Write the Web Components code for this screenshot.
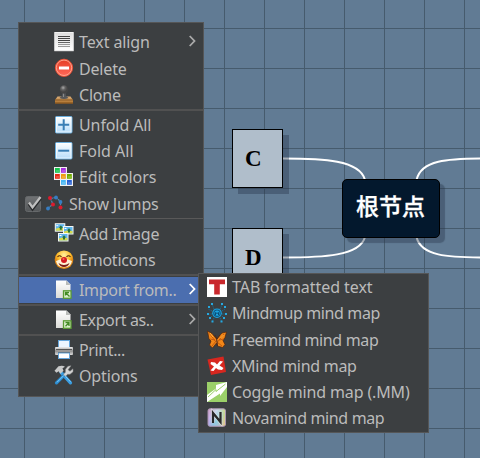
<!DOCTYPE html>
<html lang="en">
<head>
<meta charset="utf-8">
<title>Mind map</title>
<style>
html,body{margin:0;width:480px;height:458px;overflow:hidden}
</style>
</head>
<body>
<mind-canvas>
  <map-node style="left:232px;top:129px;width:51px">C</map-node>
  <map-node style="left:232px;top:228px;width:51px">D</map-node>
  <map-node root style="left:342px;top:179px;width:98px">根节点</map-node>
  <context-menu slot="menu" style="left:18px;top:22px;width:186px;height:375px;--top:6px">
    <menu-item icon="align" w="71" arrow style="--h:27px">Text align</menu-item>
    <menu-item icon="delete" w="48">Delete</menu-item>
    <menu-item icon="clone" w="42">Clone</menu-item>
    <menu-separator></menu-separator>
    <menu-item icon="plus" w="72">Unfold All</menu-item>
    <menu-item icon="minus" w="55">Fold All</menu-item>
    <menu-item icon="colors" w="77" style="--h:27px">Edit colors</menu-item>
    <menu-item icon="jumps" w="90" checked>Show Jumps</menu-item>
    <menu-separator thin></menu-separator>
    <menu-item icon="image" w="80">Add Image</menu-item>
    <menu-item icon="clown" w="76">Emoticons</menu-item>
    <menu-separator></menu-separator>
    <menu-item icon="import" w="97" arrow active>Import from..</menu-item>
    <menu-separator></menu-separator>
    <menu-item icon="export" w="75" arrow>Export as..</menu-item>
    <menu-separator></menu-separator>
    <menu-item icon="print" w="46">Print...</menu-item>
    <menu-item icon="tools" w="58">Options</menu-item>
  </context-menu>
  <context-menu slot="menu" style="left:198px;top:273px;width:231px;height:160px;--top:0px;--inset:8px">
    <menu-item icon="tab" w="141">TAB formatted text</menu-item>
    <menu-item icon="mindmup" w="148" style="--h:27px">Mindmup mind map</menu-item>
    <menu-item icon="butterfly" w="146">Freemind mind map</menu-item>
    <menu-item icon="xmind" w="125">XMind mind map</menu-item>
    <menu-item icon="coggle" w="178">Coggle mind map (.MM)</menu-item>
    <menu-item icon="nova" w="152">Novamind mind map</menu-item>
  </context-menu>
</mind-canvas>
<script>
const page = `<defs><linearGradient id="pg" x2="0" y2="1"><stop stop-color="#fff"/><stop offset="1" stop-color="#dcdcd8"/></linearGradient></defs>
<path d="M2 .5h10.5l4 4v13.500H2z" fill="url(#pg)"/><path d="M12 .5V5h4.500z" fill="#b9bbb8"/><rect x="9.500" y="10.800" width="7.500" height="7.500" fill="#dcf0cd" stroke="#5b9b34" stroke-width="1.300"/>`;
const photo = (x, y) => `<g transform="translate(${x} ${y})"><rect width="10.5" height="8.5" fill="#f4f7f5"/><rect x="1" y="1" width="8.5" height="6.5" fill="#5fb5ed"/><path d="M1 5.5l3-1 5.5 .5v2.500H1z" fill="#d6d94e"/><path d="M6 2.200l2.200 2.300H7v2H5v-2H4z" fill="#28733b"/><path d="M1.500 2.500h2" stroke="#fff"/></g>`;
const tile = (x, y, c) => `<rect x="${x}" y="${y}" width="6.500" height="6.500" fill="#f2f2f2"/><rect x="${x + 1}" y="${y + 1}" width="4.800" height="4.800" fill="${c}"/><path d="M${x + 2} ${y + 4}h3" stroke="#fff" stroke-opacity=".35"/>`;
const button = `<defs><linearGradient id="bt" x2="0" y2="1"><stop stop-color="#fff"/><stop offset="1" stop-color="#b5dcfa"/></linearGradient></defs><rect x="1.500" y="1.500" width="16.500" height="16.500" rx="1" fill="url(#bt)" stroke="#6aaede"/><rect x="2.500" y="2.500" width="14.500" height="14.500" fill="none" stroke="#fff" stroke-opacity=".7"/>`;
const ICONS = {
  align: `<defs><linearGradient id="al" x2="0" y2="1"><stop stop-color="#dedede"/><stop offset="1" stop-color="#fff"/></linearGradient></defs><rect x=".8" y=".5" width="18.400" height="18.200" fill="url(#al)" stroke="#f2f2f2"/><path d="M4 4.500h12M4 6.500h12M4 8.500h12" stroke="#444"/><path d="M4 10.500h12" stroke="#666"/><path d="M4 12.500h12M4 14.500h12" stroke="#999"/>`,
  delete: `<defs><linearGradient id="dl" x2="0" y2="1"><stop stop-color="#e53c22"/><stop offset="1" stop-color="#ff6a5c"/></linearGradient></defs><circle cx="10" cy="8.800" r="8.600" fill="url(#dl)" stroke="#e64d35"/><circle cx="10" cy="8.800" r="7.700" fill="none" stroke="#ffad94" stroke-width=".9"/><path d="M5 7.500h10v3H5z" fill="#fff"/>`,
  clone: `<defs><linearGradient id="st" x2="0" y2="1"><stop stop-color="#deb07a"/><stop offset="1" stop-color="#a76b25"/></linearGradient><radialGradient id="kn" cx=".4" cy=".3"><stop stop-color="#aaa"/><stop offset=".5" stop-color="#626262"/><stop offset="1" stop-color="#444"/></radialGradient></defs><path d="M1 18.500V15l2.500-3.500h13L19 15v3.500z" fill="url(#st)"/><path d="M1 15h18M1 18h18" stroke="#85551e"/><path d="M8.200 6h3.600v4.500l2.700 2.500q-4.500 2-9 0l2.700-2.500z" fill="#55575a"/><path d="M9.500 7v5" stroke="#8a8a8a"/><circle cx="10" cy="4.500" r="4.200" fill="url(#kn)"/>`,
  plus: button + `<path d="M4.200 9.700h11M9.700 4.200v11" stroke="#397eb5" stroke-width="2"/>`,
  minus: button + `<path d="M4.200 9.700h11" stroke="#397eb5" stroke-width="2"/>`,
  colors: `<rect width="13" height="13" fill="#eee"/><rect x="6" y="6" width="13" height="13" fill="#eee"/>` + tile(0, 0, '#16c44b') + tile(6, 0, '#a82ede') + tile(0, 6, '#e62a16') + tile(6, 6, '#f19c12') + tile(12, 6, '#71ad00') + tile(6, 12, '#48b7f3') + tile(12, 12, '#2761d4'),
  jumps: `<path d="M2 13L7 9.500 4.500 3.500 10 2.500 14.500 6.500V13" fill="none" stroke="#4e89b8" stroke-width="1.200" stroke-dasharray="2 .6"/><g fill="#dc1b2c"><circle cx="4" cy="3" r="2"/><circle cx="7" cy="9.500" r="2"/><circle cx="14.500" cy="12.500" r="2"/></g><g fill="#367dc2"><circle cx="10" cy="2.500" r="1.900"/><circle cx="14.500" cy="7" r="1.900"/><circle cx="2" cy="13.500" r="1.900"/></g>`,
  image: `<g transform="translate(0 -1)">${photo(.8, .2)}${photo(9, 3)}${photo(4, 10)}</g>`,
  clown: `<defs><radialGradient id="cl" cy=".25"><stop stop-color="#fff0a0"/><stop offset=".7" stop-color="#fdbd2c"/><stop offset="1" stop-color="#e08815"/></radialGradient></defs><circle cx="10" cy="9.700" r="9.300" fill="url(#cl)"/><path d="M2 11q8-4 16 0-1 6-8 6.500Q3 17 2 11z" fill="#fff1d3"/><path d="M4.500 13q5.500 4 11 0-1.500 4-5.500 4t-5.500-4z" fill="#7b1b14"/><path d="M3.500 7Q5.500 4.500 7.500 7M12.500 7q2-2.500 4 0" stroke="#57290e" stroke-width="1.200" fill="none"/><circle cx="10" cy="10" r="3" fill="#d51a21"/><circle cx="9.500" cy="9" r="1" fill="#f46a5d"/>`,
  import: page + `<path d="M11.500 15.500v-3H15M12 13l3.500 3.500" fill="none" stroke="#438a24" stroke-width="1.300"/>`,
  export: page + `<path d="M11.500 12.500h3.500V16M15 12.800l-3.500 3.500" fill="none" stroke="#438a24" stroke-width="1.300"/>`,
  print: `<defs><linearGradient id="pr" x2="0" y2="1"><stop stop-color="#eee"/><stop offset=".5" stop-color="#8d8d8d"/><stop offset="1" stop-color="#ddd"/></linearGradient></defs><rect x="4.500" y=".5" width="11" height="8" fill="#edf6ff" stroke="#67a7dc"/><rect x="1" y="7" width="18" height="8" rx="1" fill="url(#pr)"/><path d="M2 9.500h16" stroke="#555"/><path d="M4 12.500h12" stroke="#555"/><rect x="4.500" y="13" width="11" height="5.500" fill="#fff" stroke="#67a7dc"/>`,
  tools: `<g transform="translate(0 -.7)"><path d="M7 7l9.500 10.500" stroke="#3a9de0" stroke-width="3.300" stroke-linecap="round"/><path d="M11 9l-8.500 8.500" stroke="#2b8cd0" stroke-width="3.300" stroke-linecap="round"/><path d="M10 10l-7 7M10 9.500l6.500 7" stroke="#82cdfb"/><path d="M.5 5.500l4-4.500q4-1.500 6.500 .5L8.500 3l1 2.500-3 3L4.500 6 2.500 7.500z" fill="#c8c9c9"/><path d="M17 .5l-3 .5-2.500 3v3L9.500 9l2 2 2-2h2.500l3-2.500v-3L16 6l-2-1.500z" fill="#d5d5d5" stroke="#888" stroke-width=".5"/></g>`,
  tab: `<rect width="20" height="20" fill="#fff"/><path d="M2 2.500h16v4.800h-5.200V17.500H7.200V7.300H2z" fill="#c9282d"/>`,
  mindmup: `<g fill="none" stroke="#176b91" stroke-width="1"><path d="M7 6L5 1M13 6l2.500-5M5 8L1 6M15 8l3-2M5 11H1M15 11h4M5 13l-3 3M15 13l3 3M7 15l-2 4M13 15l2 4" stroke-dasharray="1.500 1"/></g><circle cx="10" cy="10.200" r="4.800" fill="#1ca4df"/><circle cx="10" cy="10.200" r="3.200" fill="none" stroke="#0f5a86" stroke-width="1.200"/><path d="M8.500 12V9.500l1.500 1 1.500-1V12" fill="none" stroke="#0b4e78"/><path d="M4 0h2v2H4zM14 0h2v2h-2zM1 3h2v2H1zM17 3h2v2h-2zM0 10h2v2H0zM18 10h2v2h-2zM2 14h2v2H2zM16 14h2v2h-2zM4.500 17.500h2v2h-2zM13.500 17.500h2v2h-2z" fill="#27a8df"/>`,
  butterfly: `<path d="M9.500 9L5 3.500.5 1 2 9l2 2-1.500 4 3 3 4-5 1 3 5 1.500 2.500-3-2-4 2-3L19.500 2 15 3z" fill="#f38718" stroke="#53240b" stroke-width=".7"/><path d="M2.500 3.500l6 8M17 4l-6.500 8M5 16l4-5M15 16l-5-4M3 9l5 1M17 9l-5 1" stroke="#b9500b" stroke-width=".8"/><path d="M9.500 8l1 8M10 9L8 5M10 9l3-4" stroke="#4d2a1b" stroke-width="1"/><path d="M3 3l3 4M16.500 5l-3 3" stroke="#ffb140"/>`,
  xmind: `<path d="M.5 3.500L16.500.5 19 16 4 19z" fill="#d7271f"/><path d="M4 6l4 .5 2 2 3-3.500 3 .5-3.500 4 4 2.500-1.500 2-4-.5-2-1.500-2.500 3-3-.5L7 10.500 3.500 8z" fill="#fff"/>`,
  coggle: `<rect width="20" height="20" fill="#9bd069"/><path d="M20 0L9 3v3.500L0 13v7l13-8.500V14l7-9z" fill="#fff"/><path d="M18.500 2L9 9.500V7.500L1 15" fill="none" stroke="#9bd069" stroke-width="1"/>`,
  nova: `<defs><linearGradient id="nv" x2="1" y2="1"><stop stop-color="#ffb09a"/><stop offset=".3" stop-color="#e7d5ee"/><stop offset=".6" stop-color="#8cc6dd"/><stop offset="1" stop-color="#ee91cf"/></linearGradient><linearGradient id="nw" x2="1"><stop stop-color="#b58be8" stop-opacity=".6"/><stop offset=".5" stop-color="#8ee4e6" stop-opacity=".3"/><stop offset="1" stop-color="#f2e15d" stop-opacity=".7"/></linearGradient></defs><rect x="1" y=".8" width="17.500" height="17.500" rx="2" fill="url(#nv)"/><rect x="1" y=".8" width="17.500" height="17.500" rx="2" fill="url(#nw)" stroke="#a995b2"/><path d="M6 15V5L13.500 14V4" fill="none" stroke="#fff" stroke-opacity=".55" stroke-width="3.600"/><path d="M6 15V5L13.500 14V4" fill="none" stroke="#292929" stroke-width="2.300"/>`
};

class MindCanvas extends HTMLElement {
  constructor() {
    super();
    this.attachShadow({mode: 'open'}).innerHTML = `<style>
      :host{display:block;position:relative;width:480px;height:458px;overflow:hidden;background:
        linear-gradient(90deg,#465b6d 1px,transparent 1px) 24px 0/40px 40px,
        linear-gradient(#465b6d 1px,transparent 1px) 0 28px/40px 40px,#617b94}
      svg{position:absolute;inset:0}
    </style>
    <svg width="480" height="458" fill="none" stroke="#fff" stroke-width="2">
      <path d="M283 158.500C323 158.500 360 160 365 180M283 257.500C323 257.500 360 256 365 237M416.500 180C421 160 447 158.500 486 158.500M416.500 237C421 256 447 257.500 486 257.500"/>
    </svg><slot></slot><slot name="menu"></slot>`;
  }
}
class MapNode extends HTMLElement {
  constructor() {
    super();
    this.attachShadow({mode: 'open'}).innerHTML = `<style>
      :host{position:absolute;box-sizing:border-box;height:59px;display:flex;align-items:center;padding-left:12px;
        border:1px solid #000;background:#b0becb;color:#000;box-shadow:6px 6px 0 rgba(40,55,75,.4);
        font:bold 23px/28px "Liberation Serif",serif}
      :host([root]){border-radius:5px;background:#03182d;color:#fff;padding:0 0 7px 13px;box-shadow:5px 5px 1px rgba(40,55,75,.4);
        font:500 23px/28px "Noto Sans CJK SC",sans-serif;-webkit-text-stroke:.3px #fff}
      span{white-space:nowrap}
    </style><span><slot></slot></span>`;
  }
}
class ContextMenu extends HTMLElement {
  constructor() {
    super();
    this.attachShadow({mode: 'open'}).innerHTML = `<style>
      :host{position:absolute;box-sizing:border-box;display:flex;flex-direction:column;padding-top:var(--top);
        border:1px solid #555657;background:#3c3f41;color:#bbb;font:16px/26px "Noto Sans",sans-serif}
    </style><slot></slot>`;
  }
}
class MenuSeparator extends HTMLElement {
  constructor() {
    super();
    this.attachShadow({mode: 'open'}).innerHTML = `<style>
      :host{flex:none;box-sizing:border-box;display:block;height:4px;padding-top:1px}
      i{display:block;height:2px;background:#515151}
      :host([thin]) i{height:1px;background:#595959}
    </style><i></i>`;
  }
}
class MenuIcon extends HTMLElement {
  connectedCallback() {
    this.attachShadow({mode: 'open'}).innerHTML = `<style>:host{display:block;width:20px;height:20px;flex:none}svg{display:block;overflow:visible}</style>
      <svg width="20" height="20" viewBox="0 0 20 20">${ICONS[this.getAttribute('name')]}</svg>`;
  }
}
class MenuItem extends HTMLElement {
  connectedCallback() {
    const checked = this.hasAttribute('checked');
    this.attachShadow({mode: 'open'}).innerHTML = `<style>
      :host{flex:none;box-sizing:border-box;height:var(--h,26px);display:flex;align-items:flex-start;padding:0 7px 0 var(--inset,35px)}
      :host([checked]){padding-left:6px}
      :host([active]){background:#4b6eaf}
      menu-icon{margin:3px 5px 0 0}
      :host([checked]) menu-icon{margin:4px 3px 0 4px}
      .label{flex:1;white-space:nowrap}
      .label span{display:inline-block}
      .arrow{flex:none;margin-top:5px}
      .check{flex:none;margin-top:3px;overflow:visible}
    </style>
    ${checked ? `<svg class="check" width="17" height="20" viewBox="0 0 17 20"><defs><linearGradient id="cb" x2="0" y2="1"><stop stop-color="#707274"/><stop offset="1" stop-color="#55585a"/></linearGradient></defs><rect x=".5" y="2.500" width="15" height="15" rx="2" fill="url(#cb)" stroke="#66696b"/><path d="M4 9l3.500 5L15.500 3.500" fill="none" stroke="#292b2d" stroke-width="3" transform="translate(0 1)"/><path d="M4 8.500l3.500 5L15.500 3" fill="none" stroke="#c0c0c0" stroke-width="2.200"/></svg>` : ''}
    <menu-icon name="${this.getAttribute('icon')}"></menu-icon>
    <div class="label"><span><slot></slot></span></div>
    ${this.hasAttribute('arrow') ? `<svg class="arrow" width="8" height="14"><path d="M1.700 2L6.500 7l-4.800 5" fill="none" stroke="${this.hasAttribute('active') ? '#fff' : '#aaa'}" stroke-width="1.800"/></svg>` : ''}`;
    // Tune tracking so that the label spans its nominal width.
    const span = this.shadowRoot.querySelector('span');
    const chars = this.textContent.length;
    span.style.letterSpacing = (this.getAttribute('w') - span.offsetWidth) / chars + 'px';
  }
}
customElements.define('mind-canvas', MindCanvas);
customElements.define('map-node', MapNode);
customElements.define('context-menu', ContextMenu);
customElements.define('menu-separator', MenuSeparator);
customElements.define('menu-icon', MenuIcon);
customElements.define('menu-item', MenuItem);
</script>
</body>
</html>
